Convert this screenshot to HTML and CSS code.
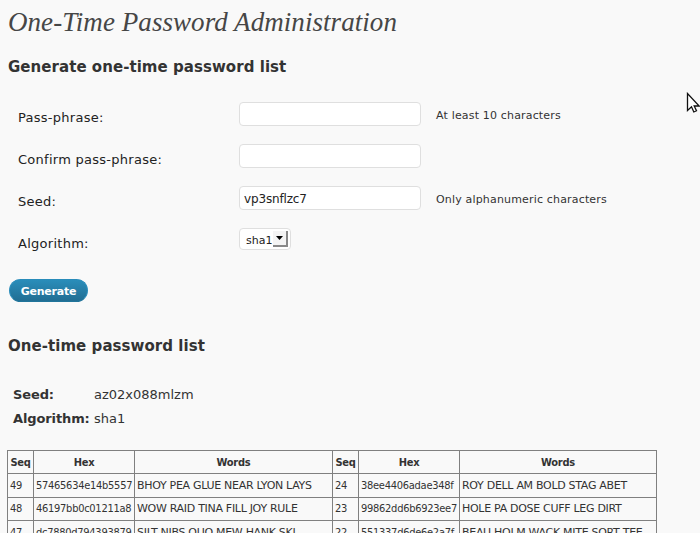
FILE: index.html
```html
<!DOCTYPE html>
<html lang="en">
<head>
<meta charset="utf-8">
<title>One-Time Password Administration</title>
<link rel="stylesheet" href="styles.css">
</head>
<body>
<main class="wrap">
  <h1 class="title">One-Time Password Administration</h1>
  <h3 class="heading">Generate one-time password list</h3>
  <form class="form">
    <div class="row"><label class="label" for="pass">Pass-phrase:</label><input class="field" id="pass" type="text"><span class="hint">At least 10 characters</span></div>
    <div class="row"><label class="label" for="confirm">Confirm pass-phrase:</label><input class="field" id="confirm" type="text"></div>
    <div class="row"><label class="label" for="seed">Seed:</label><input class="field" id="seed" type="text" value="vp3snflzc7"><span class="hint">Only alphanumeric characters</span></div>
    <div class="row"><span class="label">Algorithm:</span><div class="select"><span>sha1</span><i class="drop"><svg width="7" height="4" viewBox="0 0 7 4"><path d="M0 0h7L3.5 4z"/></svg></i></div></div>
    <button class="button" type="button">Generate</button>
  </form>
  <h3 class="heading second">One-time password list</h3>
  <dl class="info">
    <dt>Seed:</dt><dd>az02x088mlzm</dd>
    <dt>Algorithm:</dt><dd>sha1</dd>
  </dl>
  <table class="list">
    <colgroup><col class="seq"><col class="hex"><col class="words"><col class="seq"><col class="hex"><col class="last"></colgroup>
    <tr><th>Seq</th><th>Hex</th><th>Words</th><th>Seq</th><th>Hex</th><th>Words</th></tr>
    <tr class="tall"><td>49</td><td>57465634e14b5557</td><td class="phrase">BHOY PEA GLUE NEAR LYON LAYS</td><td>24</td><td>38ee4406adae348f</td><td class="phrase">ROY DELL AM BOLD STAG ABET</td></tr>
    <tr><td>48</td><td>46197bb0c01211a8</td><td class="phrase">WOW RAID TINA FILL JOY RULE</td><td>23</td><td>99862dd6b6923ee7</td><td class="phrase">HOLE PA DOSE CUFF LEG DIRT</td></tr>
    <tr class="tall"><td>47</td><td>dc7880d794393879</td><td class="phrase">SILT NIBS QUO MEW HANK SKI</td><td>22</td><td>551337d6de6e2a7f</td><td class="phrase">BEAU HOLM WACK MITE SORT TEE</td></tr>
  </table>
</main>
<svg class="cursor" width="14" height="22" viewBox="0 0 14 22"><path d="M1.5 1.5v17l4-3.7 2.3 5.2 2.7-1.2-2.3-4.8h5z"/></svg>
</body>
</html>
```
FILE: styles.css
```css
* { box-sizing: border-box; }
html, body { margin: 0; height: 533px; overflow: hidden; }
body {
  position: relative;
  background: #f9f9f9;
  color: #333;
  font-family: "DejaVu Sans", sans-serif;
  font-size: 13px;
}
.wrap { padding-left: 7px; }
.title {
  margin: 0;
  padding: 4px 0 0 1px;
  height: 56px;
  font: italic 400 27px/36px "Liberation Serif", serif;
  letter-spacing: 0.06px;
  color: #464646;
  white-space: nowrap;
}
.heading {
  margin: 0 0 0 1px;
  padding-top: 1px;
  font-size: 15px;
  line-height: 20px;
  height: 20px;
  letter-spacing: 0.05px;
  white-space: nowrap;
}
.form { padding: 26px 0 0 11px; }
.row { display: flex; align-items: flex-start; height: 42px; }
.label { width: 221px; line-height: 16px; padding-top: 8px; letter-spacing: 0.27px; color: #222; }
.field {
  width: 182px;
  height: 24px;
  border: 1px solid #dfdfdf;
  border-radius: 4px;
  background: #fff;
  padding: 1px 4px 0;
  margin: 0;
  font: 12px "DejaVu Sans", sans-serif;
  letter-spacing: -0.15px;
  color: #222;
}
.hint { margin-left: 15px; padding-top: 7px; line-height: 14px; font-size: 11px; letter-spacing: 0.17px; }
.select {
  display: flex;
  align-items: center;
  width: 52px;
  height: 22px;
  border: 1px solid #dfdfdf;
  border-radius: 4px;
  background: #fff;
  padding-left: 6px;
  font-size: 11px;
  color: #222;
}
.select span { width: 27px; padding-top: 2px; }
.drop {
  display: flex;
  align-items: center;
  justify-content: center;
  width: 15px;
  height: 16px;
  background: #f4f4f4;
  border: solid #888;
  border-width: 0 2px 2px 0;
}
.button {
  display: block;
  margin: 9px 0 0 -9px;
  width: 79px;
  height: 23px;
  padding: 1px 0 0;
  border: 1px solid #298cba;
  border-bottom-color: #21759b;
  border-radius: 12px;
  background: linear-gradient(#2a8dba, #216e93);
  color: #fff;
  font: bold 11px "DejaVu Sans", sans-serif;
  letter-spacing: -0.2px;
}
.second { margin-top: 33px; }
.info {
  display: grid;
  grid-template-columns: 81px 1fr;
  align-content: start;
  margin: 28px 0 0 6px;
  line-height: 24px;
  height: 67px;
}
.info dt { font-weight: bold; letter-spacing: -0.12px; }
.info dd { margin: 0; }
.list {
  table-layout: fixed;
  width: 650px;
  border-collapse: separate;
  border-spacing: 0;
  border: solid #808080;
  border-width: 1px 0 0 1px;
  font: 11px/14px "DejaVu Sans Condensed", "DejaVu Sans", sans-serif;
  letter-spacing: -0.27px;
  white-space: nowrap;
}
.list th, .list td { height: 23px; padding: 0 2px; border: solid #808080; border-width: 0 1px 1px 0; }
.list th { padding-top: 1px; }
.list td { text-align: left; }
.list .phrase { font-family: "DejaVu Sans", sans-serif; letter-spacing: -0.3px; }
.list .tall td { height: 24px; }
.seq { width: 26px; }
.hex { width: 101px; }
.words { width: 198px; }
.last { width: 197px; }
.cursor { position: absolute; left: 686px; top: 92px; fill: #fff; stroke: #111; stroke-width: 1.3; }
```
